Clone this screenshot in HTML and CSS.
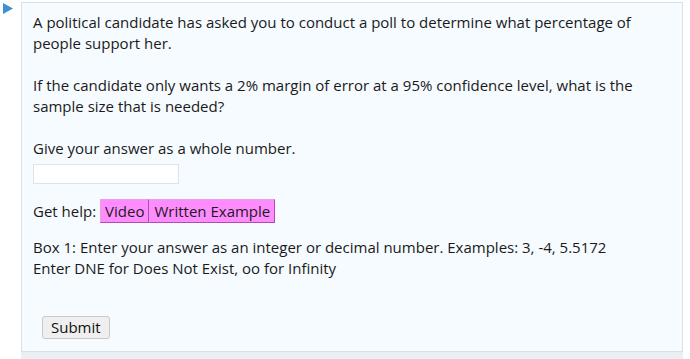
FILE: index.html
```html
<!DOCTYPE html>
<html>
<head>
<meta charset="utf-8">
<link rel="stylesheet" href="styles.css">
</head>
<body>
<div class="page">
  <div class="gutter">
    <svg class="tri" width="10" height="11" viewBox="0 0 10 11"><polygon points="0,0 10,5.5 0,11" fill="#3d8fd6"/></svg>
  </div>
  <div class="col">
    <div class="panel">
      <p class="para">A political candidate has asked you to conduct a poll to determine what percentage of people support her.</p>
      <p class="para">If the candidate only wants a 2% margin of error at a 95% confidence level, what is the sample size that is needed?</p>
      <p class="para">Give your answer as a whole number.</p>
      <div class="field"><input class="answer" type="text"></div>
      <div class="help">Get help: <span class="btns"><span class="hbtn">Video</span><span class="hbtn">Written Example</span></span></div>
      <p class="hint">Box 1: Enter your answer as an integer or decimal number. Examples: 3, -4, 5.5172<br>Enter DNE for Does Not Exist, oo for Infinity</p>
      <div class="submit-row"><button class="submit">Submit</button></div>
    </div>
    <div class="band"></div>
  </div>
</div>
</body>
</html>
```
FILE: styles.css
```css
html, body { margin: 0; padding: 0; background: #ffffff; }
body { font-family: "Open Sans", "Noto Sans", sans-serif; color: #1a1a1a; font-size: 15px; }
.page { display: flex; width: 690px; height: 359px; overflow: hidden; }
.gutter { width: 21px; flex: none; }
.tri { display: block; margin: 3px 0 0 3px; }
.col { display: flex; flex-direction: column; margin-top: 2px; width: 662px; }
.panel { background: #f6fbff; border: 1px solid #d9e1e8; padding: 9px 11px 0 11px; height: 350px; box-sizing: border-box; flex: none; }
.para { margin: 0 0 21px 0; line-height: 21px; }
.field { margin-top: -16px; }
.answer { width: 146px; height: 20px; box-sizing: border-box; border: 1px solid #dde3ea; background: #fff; margin: 0; padding: 0 3px; display: block; }
.help { margin-top: 15px; line-height: 24px; display: flex; align-items: center; }
.btns { display: inline-flex; margin-left: 4px; }
.hbtn { background: #ff8cff; border: 1px solid #b04cb0; border-top-color: #e6a0e6; border-left-color: #e6a0e6; padding: 0 4px; line-height: 22px; color: #1a1a1a; }
.hint { margin: 14px 0 0 0; line-height: 21px; }
.submit-row { margin-top: 37px; padding-left: 9px; }
.submit { font-family: inherit; font-size: 15px; color: #111; background: #efefef; border: 1px solid #c8c8c8; border-radius: 3px; padding: 0 8px; height: 23px; line-height: 21px; }
.band { height: 8px; background: #e9eff3; flex: none; }
```
